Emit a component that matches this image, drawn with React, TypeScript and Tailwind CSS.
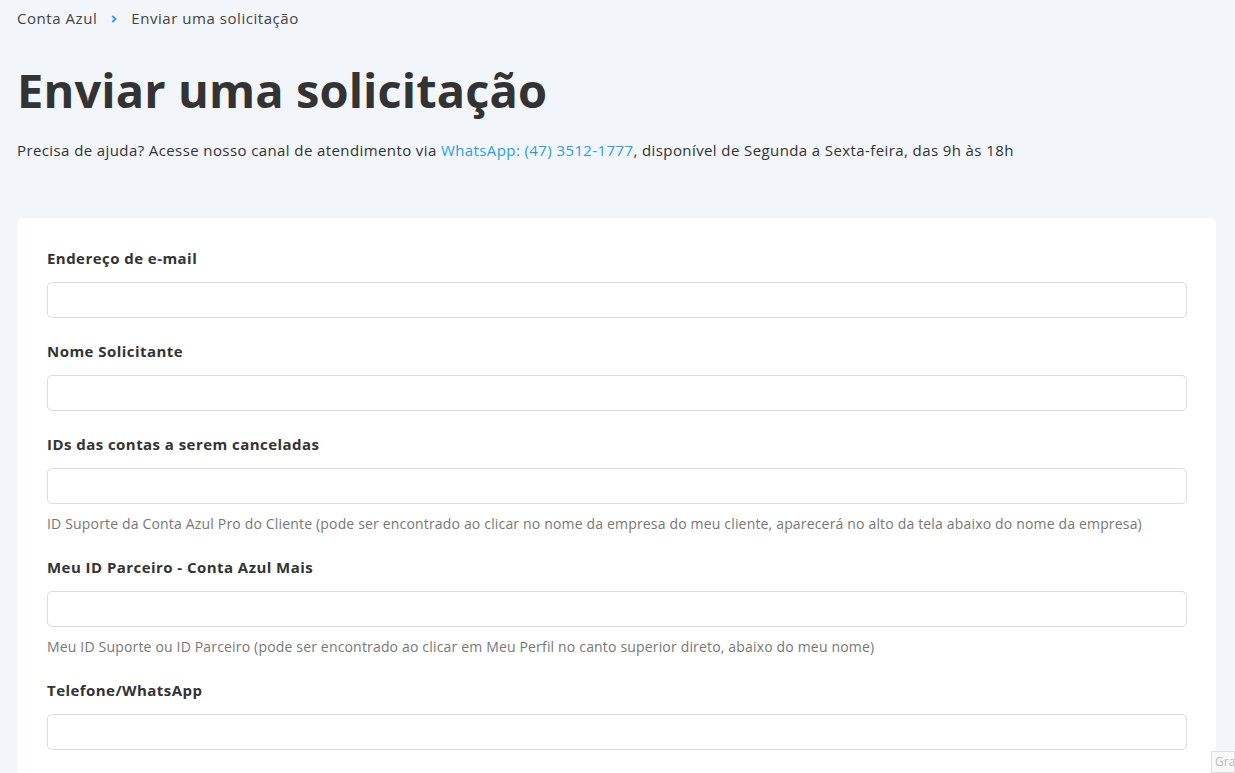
import React from "react";

const font = { fontFamily: '"Open Sans", "Noto Sans", sans-serif' };

function Field({ label, hint }: { label: string; hint?: string }) {
  return (
    <div className="flex flex-col">
      <label className="mb-[13px] text-[15px] font-bold leading-[22px] tracking-[0.45px] text-[#333]">{label}</label>
      <input
        type="text"
        className="h-[36px] w-full rounded-[5px] border border-[#dcdcdc] bg-white px-3 text-[15px] outline-none"
      />
      {hint && <p className="mb-[2px] mt-[12px] text-[14px] leading-[16px] tracking-[0.17px] text-[#777]">{hint}</p>}
    </div>
  );
}

export default function App() {
  return (
    <div className="min-h-screen overflow-hidden bg-[#f2f5f9] pl-[17px] pr-[19px] text-[#333]" style={font}>
      <nav className="flex h-[37px] items-center text-[15px] tracking-[0.55px] text-[#444]">
        <span>Conta Azul</span>
        <svg viewBox="0 0 10 10" className="ml-[13px] mr-[12px] h-[10px] w-[9px] text-[#2a9fe0]">
          <path d="M2.5 1.5 L6 5 L2.5 8.5" fill="none" stroke="currentColor" strokeWidth="2.2" />
        </svg>
        <span>Enviar uma solicitação</span>
      </nav>
      <h1 className="mt-[25px] text-[47px] font-bold leading-[56px] tracking-[0.1px] text-[#333]">Enviar uma solicitação</h1>
      <p className="mt-[21px] text-[15px] leading-[22px] tracking-[0.4px]">
        Precisa de ajuda? Acesse nosso canal de atendimento via{" "}
        <a href="#" className="text-[#2a9fe0]">WhatsApp: (47) 3512-1777</a>, disponível de Segunda a Sexta-feira, das 9h às 18h
      </p>
      <section className="mt-[57px] flex flex-col gap-[22px] rounded-[6px] bg-white pb-[40px] pl-[30px] pr-[29px] pt-[29px]">
        <Field label="Endereço de e-mail" />
        <Field label="Nome Solicitante" />
        <Field
          label="IDs das contas a serem canceladas"
          hint="ID Suporte da Conta Azul Pro do Cliente (pode ser encontrado ao clicar no nome da empresa do meu cliente, aparecerá no alto da tela abaixo do nome da empresa)"
        />
        <Field
          label="Meu ID Parceiro - Conta Azul Mais"
          hint="Meu ID Suporte ou ID Parceiro (pode ser encontrado ao clicar em Meu Perfil no canto superior direto, abaixo do meu nome)"
        />
        <Field label="Telefone/WhatsApp" />
      </section>
      <div className="fixed bottom-0 right-0 h-[22px] w-[24px] overflow-hidden border border-[#ddd] bg-[#f9f9f9] pl-[3px] text-[12px] leading-[20px] text-[#bbb]">
        Gra
      </div>
    </div>
  );
}
